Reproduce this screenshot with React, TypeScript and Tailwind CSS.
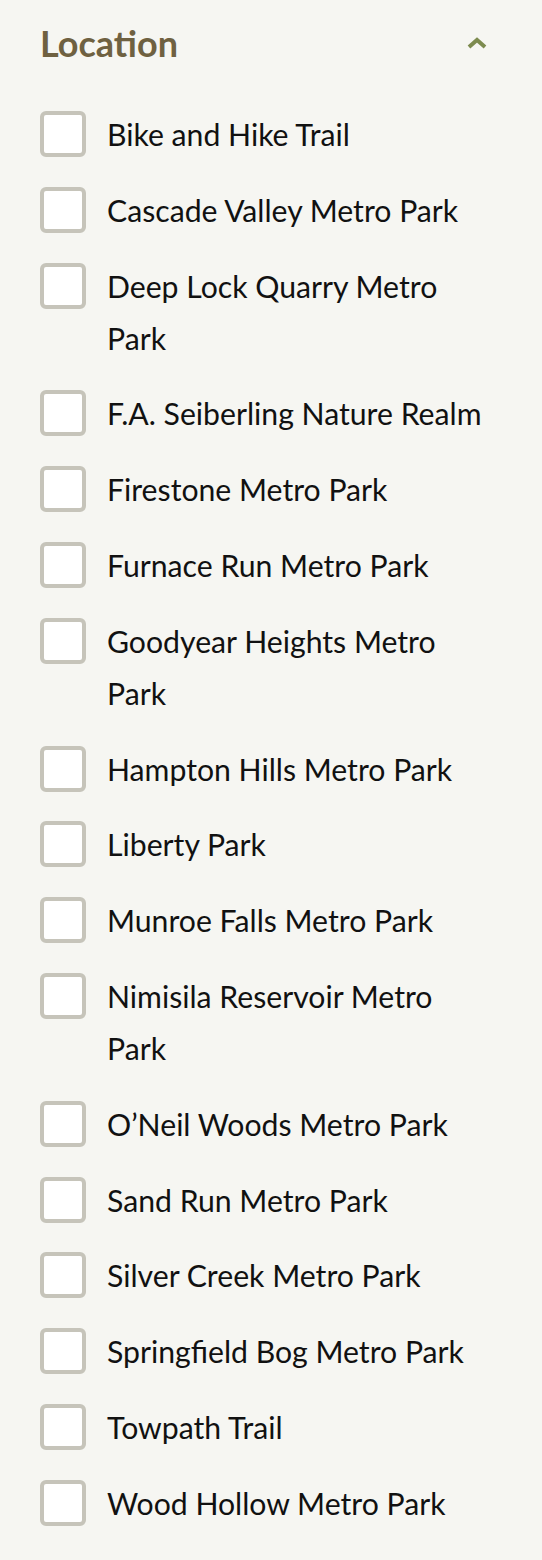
const parks = [
  "Bike and Hike Trail",
  "Cascade Valley Metro Park",
  "Deep Lock Quarry Metro Park",
  "F.A. Seiberling Nature Realm",
  "Firestone Metro Park",
  "Furnace Run Metro Park",
  "Goodyear Heights Metro Park",
  "Hampton Hills Metro Park",
  "Liberty Park",
  "Munroe Falls Metro Park",
  "Nimisila Reservoir Metro Park",
  "O\u2019Neil Woods Metro Park",
  "Sand Run Metro Park",
  "Silver Creek Metro Park",
  "Springfield Bog Metro Park",
  "Towpath Trail",
  "Wood Hollow Metro Park",
]

export default function App() {
  return (
    <div
      className="min-h-[1560px] w-full bg-[#f6f6f2] px-[40px] pt-[22px]"
      style={{ fontFamily: "Lato, 'Open Sans', sans-serif" }}
    >
      {/* Header */}
      <button className="flex w-full items-center justify-between pr-[14px]">
        <h3 className="text-[36px] font-bold leading-[42px] text-[#6f6141]">Location</h3>
        <svg width="22" height="14" viewBox="0 0 22 14" fill="none">
          <path d="M3 11 L11 4 L19 11" stroke="#7d8b4f" strokeWidth="4" />
        </svg>
      </button>

      {/* Options */}
      <ul className="mt-[44px] flex flex-col gap-[23.8px] pr-[14px]">
        {parks.map((p) => (
          <li key={p} className="flex items-start gap-[21px]">
            <span className="mt-[3px] h-[46px] w-[46px] shrink-0 rounded-[6px] border-[4px] border-[#c6c4ba] bg-white" />
            <span className="text-[30.2px] leading-[52px] text-[#111]">{p}</span>
          </li>
        ))}
      </ul>
    </div>
  )
}
